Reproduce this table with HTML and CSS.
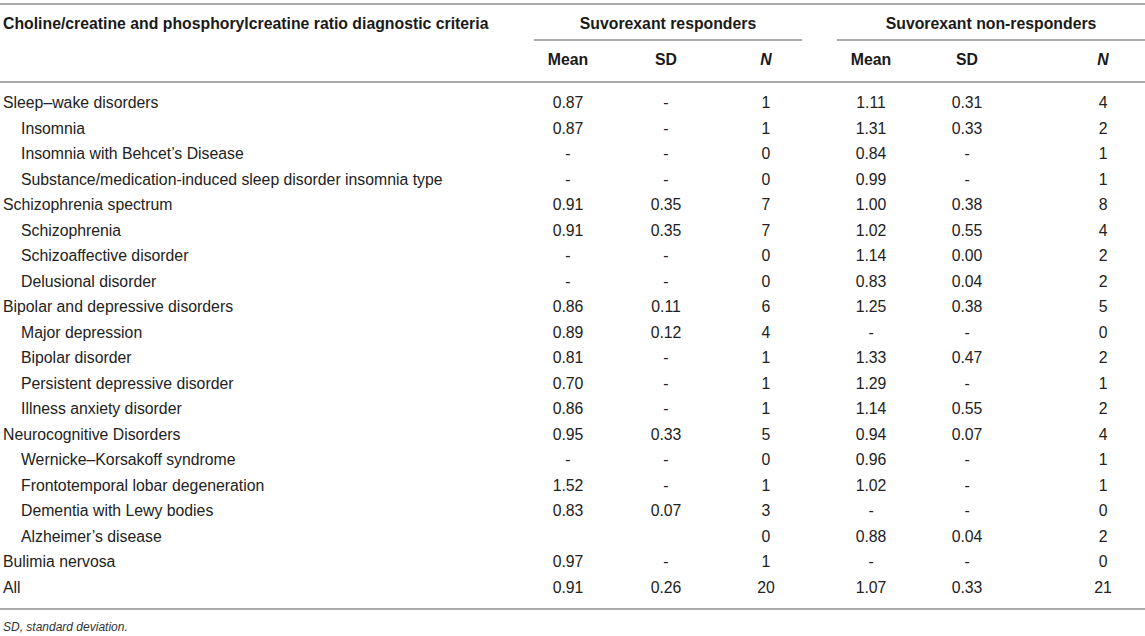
FILE: index.html
```html
<!DOCTYPE html>
<html>
<head>
<meta charset="utf-8">
<link rel="stylesheet" href="styles.css">
</head>
<body>
<div class="wrap">
<table class="tbl">
  <colgroup>
    <col class="c-crit"><col class="c-mean"><col class="c-sd"><col class="c-n">
    <col class="c-gap"><col class="c-mean"><col class="c-sd2"><col class="c-n2">
  </colgroup>
  <thead>
    <tr class="grp-row">
      <th class="crit">Choline/creatine and phosphorylcreatine ratio diagnostic criteria</th>
      <th class="grp" colspan="3">Suvorexant responders</th>
      <th class="gap"></th>
      <th class="grp" colspan="3">Suvorexant non-responders</th>
    </tr>
    <tr class="col-row">
      <th></th>
      <th>Mean</th><th>SD</th><th><i>N</i></th>
      <th></th>
      <th>Mean</th><th>SD</th><th class="nlast"><i>N</i></th>
    </tr>
  </thead>
  <tbody>
    <tr class="main"><td>Sleep–wake disorders</td><td>0.87</td><td>-</td><td>1</td><td></td><td>1.11</td><td>0.31</td><td class="nlast">4</td></tr>
    <tr class="sub"><td>Insomnia</td><td>0.87</td><td>-</td><td>1</td><td></td><td>1.31</td><td>0.33</td><td class="nlast">2</td></tr>
    <tr class="sub"><td>Insomnia with Behcet’s Disease</td><td>-</td><td>-</td><td>0</td><td></td><td>0.84</td><td>-</td><td class="nlast">1</td></tr>
    <tr class="sub"><td>Substance/medication-induced sleep disorder insomnia type</td><td>-</td><td>-</td><td>0</td><td></td><td>0.99</td><td>-</td><td class="nlast">1</td></tr>
    <tr class="main"><td>Schizophrenia spectrum</td><td>0.91</td><td>0.35</td><td>7</td><td></td><td>1.00</td><td>0.38</td><td class="nlast">8</td></tr>
    <tr class="sub"><td>Schizophrenia</td><td>0.91</td><td>0.35</td><td>7</td><td></td><td>1.02</td><td>0.55</td><td class="nlast">4</td></tr>
    <tr class="sub"><td>Schizoaffective disorder</td><td>-</td><td>-</td><td>0</td><td></td><td>1.14</td><td>0.00</td><td class="nlast">2</td></tr>
    <tr class="sub"><td>Delusional disorder</td><td>-</td><td>-</td><td>0</td><td></td><td>0.83</td><td>0.04</td><td class="nlast">2</td></tr>
    <tr class="main"><td>Bipolar and depressive disorders</td><td>0.86</td><td>0.11</td><td>6</td><td></td><td>1.25</td><td>0.38</td><td class="nlast">5</td></tr>
    <tr class="sub"><td>Major depression</td><td>0.89</td><td>0.12</td><td>4</td><td></td><td>-</td><td>-</td><td class="nlast">0</td></tr>
    <tr class="sub"><td>Bipolar disorder</td><td>0.81</td><td>-</td><td>1</td><td></td><td>1.33</td><td>0.47</td><td class="nlast">2</td></tr>
    <tr class="sub"><td>Persistent depressive disorder</td><td>0.70</td><td>-</td><td>1</td><td></td><td>1.29</td><td>-</td><td class="nlast">1</td></tr>
    <tr class="sub"><td>Illness anxiety disorder</td><td>0.86</td><td>-</td><td>1</td><td></td><td>1.14</td><td>0.55</td><td class="nlast">2</td></tr>
    <tr class="main"><td>Neurocognitive Disorders</td><td>0.95</td><td>0.33</td><td>5</td><td></td><td>0.94</td><td>0.07</td><td class="nlast">4</td></tr>
    <tr class="sub"><td>Wernicke–Korsakoff syndrome</td><td>-</td><td>-</td><td>0</td><td></td><td>0.96</td><td>-</td><td class="nlast">1</td></tr>
    <tr class="sub"><td>Frontotemporal lobar degeneration</td><td>1.52</td><td>-</td><td>1</td><td></td><td>1.02</td><td>-</td><td class="nlast">1</td></tr>
    <tr class="sub"><td>Dementia with Lewy bodies</td><td>0.83</td><td>0.07</td><td>3</td><td></td><td>-</td><td>-</td><td class="nlast">0</td></tr>
    <tr class="sub"><td>Alzheimer’s disease</td><td></td><td></td><td>0</td><td></td><td>0.88</td><td>0.04</td><td class="nlast">2</td></tr>
    <tr class="main"><td>Bulimia nervosa</td><td>0.97</td><td>-</td><td>1</td><td></td><td>-</td><td>-</td><td class="nlast">0</td></tr>
    <tr class="main last"><td>All</td><td>0.91</td><td>0.26</td><td>20</td><td></td><td>1.07</td><td>0.33</td><td class="nlast">21</td></tr>
  </tbody>
</table>
<p class="note"><i>SD, standard deviation.</i></p>
</div>
</body>
</html>
```

FILE: styles.css
```css
html, body {
  margin: 0;
  padding: 0;
  background: #ffffff;
}

.wrap {
  width: 1145px;
  padding-top: 3px;
  font-family: "Liberation Sans", Arial, Helvetica, sans-serif;
  color: #222222;
}

.tbl {
  width: 1145px;
  table-layout: fixed;
  border-collapse: separate;
  border-spacing: 0;
  font-size: 15.8px;
}

.c-crit { width: 534px; }
.c-mean { width: 68px; }
.c-sd { width: 128px; }
.c-n { width: 72px; }
.c-gap { width: 35px; }
.c-sd2 { width: 124px; }
.c-n2 { width: 116px; }

.tbl th {
  font-weight: bold;
  color: #1a1a1a;
  text-align: center;
  vertical-align: top;
  line-height: 20px;
  padding: 0;
  white-space: nowrap;
}

.grp-row th {
  border-top: 2px solid #ababab;
  padding-top: 9px;
  padding-bottom: 5px;
}

.grp-row th.crit {
  text-align: left;
  padding-left: 3px;
}

.grp-row th.grp {
  border-bottom: 2px solid #ababab;
}

.grp-row th.crit,
.grp-row th.gap {
  padding-bottom: 7px;
}

.col-row th {
  padding-top: 9px;
  padding-bottom: 11px;
  border-bottom: 2px solid #ababab;
}

.col-row th i {
  font-style: italic;
}

.tbl td {
  padding: 0;
  line-height: 25.5px;
  text-align: center;
  white-space: nowrap;
  color: #222222;
}

.tbl td:first-child {
  text-align: left;
}

.main td:first-child {
  padding-left: 3px;
}

.sub td:first-child {
  padding-left: 21px;
}

.tbl .nlast {
  padding-left: 32px;
}

.tbl tbody tr:first-child td {
  padding-top: 7px;
}

.tbl tr.last td {
  padding-bottom: 8px;
  border-bottom: 2px solid #ababab;
}

.note {
  margin: 9px 0 0 0;
  padding-left: 3px;
  font-size: 12px;
  line-height: 16px;
  color: #333333;
}
```
